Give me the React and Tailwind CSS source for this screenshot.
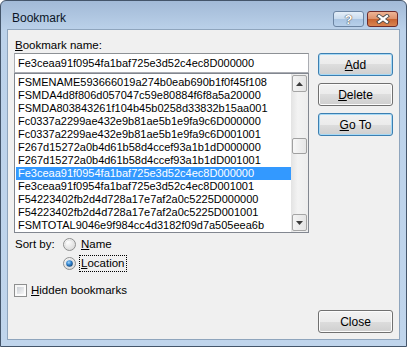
import { useState } from "react";

const bookmarks = [
    "FSMENAME593666019a274b0eab690b1f0f45f108",
    "FSMDA4d8f806d057047c59e80884f6f8a5a20000",
    "FSMDA803843261f104b45b0258d33832b15aa001",
    "Fc0337a2299ae432e9b81ae5b1e9fa9c6D000000",
    "Fc0337a2299ae432e9b81ae5b1e9fa9c6D001001",
    "F267d15272a0b4d61b58d4ccef93a1b1dD000000",
    "F267d15272a0b4d61b58d4ccef93a1b1dD001001",
    "Fe3ceaa91f0954fa1baf725e3d52c4ec8D000000",
    "Fe3ceaa91f0954fa1baf725e3d52c4ec8D001001",
    "F54223402fb2d4d728a17e7af2a0c5225D000000",
    "F54223402fb2d4d728a17e7af2a0c5225D001001",
    "FSMTOTAL9046e9f984cc4d3182f09d7a505eea6b",
];

function WinButton({ children, primary }) {
    return (
        <button
            type="button"
            className={
                "h-[23px] w-[75px] rounded-[3px] border text-[12px] text-black leading-none " +
                (primary ? "border-[#3c7fb1] shadow-[inset_0_0_0_1px_#a7d9f5]" : "border-[#707070] shadow-[inset_0_0_0_1px_#fcfcfc]") +
                " bg-[linear-gradient(#f2f2f2_0%,#ebebeb_50%,#dddddd_50%,#cfcfcf_100%)]"
            }
        >
            {children}
        </button>
    );
}

function Radio({ checked }) {
    return (
        <svg width="13" height="13" viewBox="0 0 13 13">
            <defs>
                <radialGradient id="rin" cx="0.35" cy="0.3" r="0.8">
                    <stop offset="0" stopColor="#ffffff" />
                    <stop offset="1" stopColor="#d6d6d6" />
                </radialGradient>
                <radialGradient id="rdot" cx="0.4" cy="0.35" r="0.7">
                    <stop offset="0" stopColor="#a6d8fb" />
                    <stop offset="0.5" stopColor="#2e82cf" />
                    <stop offset="1" stopColor="#123e6c" />
                </radialGradient>
            </defs>
            <circle cx="6.5" cy="6.5" r="6" fill="url(#rin)" stroke="#8e8f8f" />
            <circle cx="6.5" cy="6.5" r="4.3" fill="none" stroke="#e2e2e2" strokeWidth="0.8" />
            {checked && <circle cx="6.5" cy="6.5" r="3.3" fill="url(#rdot)" />}
        </svg>
    );
}

function App() {
    const [selected, setSelected] = useState(7);

    return (
        <div className="w-[407px] h-[347px] bg-white" style={{ fontFamily: '"Liberation Sans", Arial, sans-serif' }}>
            <div className="w-full h-full flex flex-col border border-[#44556a] rounded-t-[6px] bg-[linear-gradient(#a2bad7,#bcd2ea_30px,#c0d5ec)] px-[6px] pb-[6px]">
                {/* title bar */}
                <div className="h-[28px] flex items-start justify-between">
                    <div className="pl-[5px] pt-[10px] text-[12px] leading-[15px] text-[#0b1526]">Bookmark</div>
                    <div className="flex gap-[3px] pt-[10px] pr-[2px]">
                        <div className="w-[31px] h-[16px] rounded-[3px] border border-[#6b84a2] bg-[linear-gradient(#e4eef8_0%,#c9dbee_50%,#a9c4e2_50%,#b8d0ea_100%)] flex items-center justify-center text-[13px] font-bold leading-none text-white [text-shadow:0_0_1px_#3a3a3a,0_0_1px_#3a3a3a]">
                            ?
                        </div>
                        <div className="w-[31px] h-[16px] rounded-[3px] border border-[#6e2b2b] bg-[linear-gradient(#efb596_0%,#dd916b_50%,#c8622f_50%,#d98450_100%)] flex items-center justify-center">
                            <svg width="14" height="10" viewBox="0 0 14 10">
                                <path d="M3 2 L11 8 M11 2 L3 8" stroke="#4a4a4a" strokeWidth="4" strokeLinecap="square" />
                                <path d="M3 2 L11 8 M11 2 L3 8" stroke="#ffffff" strokeWidth="2.2" strokeLinecap="square" />
                            </svg>
                        </div>
                    </div>
                </div>

                {/* client area */}
                <div className="flex-1 border border-[#8fa5bd] bg-[#f0f0f0] flex gap-[9px] px-[6px] pt-[8px] pb-[6px] text-[11.5px] text-black">
                    <div className="w-[295px] flex flex-col">
                        <div className="h-[15px] leading-[15px] pl-[1px]">
                            <span className="underline">B</span>ookmark name:
                        </div>
                        <div className="h-[20px] border border-[#abadb3] border-t-[#8d9195] bg-white pl-[3px] leading-[18px] text-[11px]">
                            Fe3ceaa91f0954fa1baf725e3d52c4ec8D000000
                        </div>
                        <div className="h-[160px] border border-[#828790] bg-white flex text-[11px]">
                            <div className="flex-1 pt-[2px] pl-[1px] min-w-0">
                                {bookmarks.map((b, i) => (
                                    <div
                                        key={b}
                                        onClick={() => setSelected(i)}
                                        className={
                                            "h-[13px] leading-[13px] pl-[2px] whitespace-nowrap overflow-hidden " +
                                            (i === selected ? "bg-[#3399ff] text-white" : "")
                                        }
                                    >
                                        {b}
                                    </div>
                                ))}
                            </div>
                            <div className="w-[17px] flex flex-col p-[1px] bg-[linear-gradient(90deg,#e3e3e3,#f3f3f3_40%,#ededed)]">
                                <div className="h-[17px] rounded-[2px] border border-[#a5a5a5] bg-[linear-gradient(90deg,#f4f4f4,#e4e4e4)] flex items-center justify-center">
                                    <svg width="7" height="4" viewBox="0 0 7 4"><path d="M0 4 L3.5 0 L7 4 Z" fill="#3b3b3b" /></svg>
                                </div>
                                <div className="h-[46px]" />
                                <div className="h-[16px] rounded-[2px] border border-[#a0a0a0] bg-[linear-gradient(90deg,#f7f7f7,#e6e6e6)]" />
                                <div className="flex-1" />
                                <div className="h-[17px] rounded-[2px] border border-[#a5a5a5] bg-[linear-gradient(90deg,#f4f4f4,#e4e4e4)] flex items-center justify-center">
                                    <svg width="7" height="4" viewBox="0 0 7 4"><path d="M0 0 L3.5 4 L7 0 Z" fill="#3b3b3b" /></svg>
                                </div>
                            </div>
                        </div>

                        <div className="flex mt-[2px] pl-[1px]">
                            <div className="w-[48px] h-[19px] leading-[19px]">Sort by:</div>
                            <div className="flex flex-col">
                                <div className="h-[19px] flex items-center gap-[3px]">
                                    <Radio />
                                    <span className="px-[2px]"><span className="underline">N</span>ame</span>
                                </div>
                                <div className="h-[19px] flex items-center gap-[3px]">
                                    <Radio checked />
                                    <span className="px-[1px] leading-[15px] border border-dotted border-black">
                                        <span className="underline">L</span>ocation
                                    </span>
                                </div>
                            </div>
                        </div>

                        <div className="mt-[8px] h-[19px] flex items-center gap-[4px]">
                            <div className="w-[13px] h-[13px] border border-[#8e8f8f] bg-[linear-gradient(135deg,#f4f4f4,#fefefe)] p-[2px]">
                                <div className="w-full h-full bg-[linear-gradient(135deg,#cbcfd5,#f6f6f6)]" />
                            </div>
                            <span><span className="underline">H</span>idden bookmarks</span>
                        </div>
                    </div>

                    <div className="w-[75px] flex flex-col pt-[15px]">
                        <div className="flex flex-col gap-[7px]">
                            <WinButton primary><span className="underline">A</span>dd</WinButton>
                            <WinButton><span className="underline">D</span>elete</WinButton>
                            <WinButton primary><span className="underline">G</span>o To</WinButton>
                        </div>
                        <div className="mt-auto">
                            <WinButton>Close</WinButton>
                        </div>
                    </div>
                </div>
            </div>
        </div>
    );
}

export default App;
